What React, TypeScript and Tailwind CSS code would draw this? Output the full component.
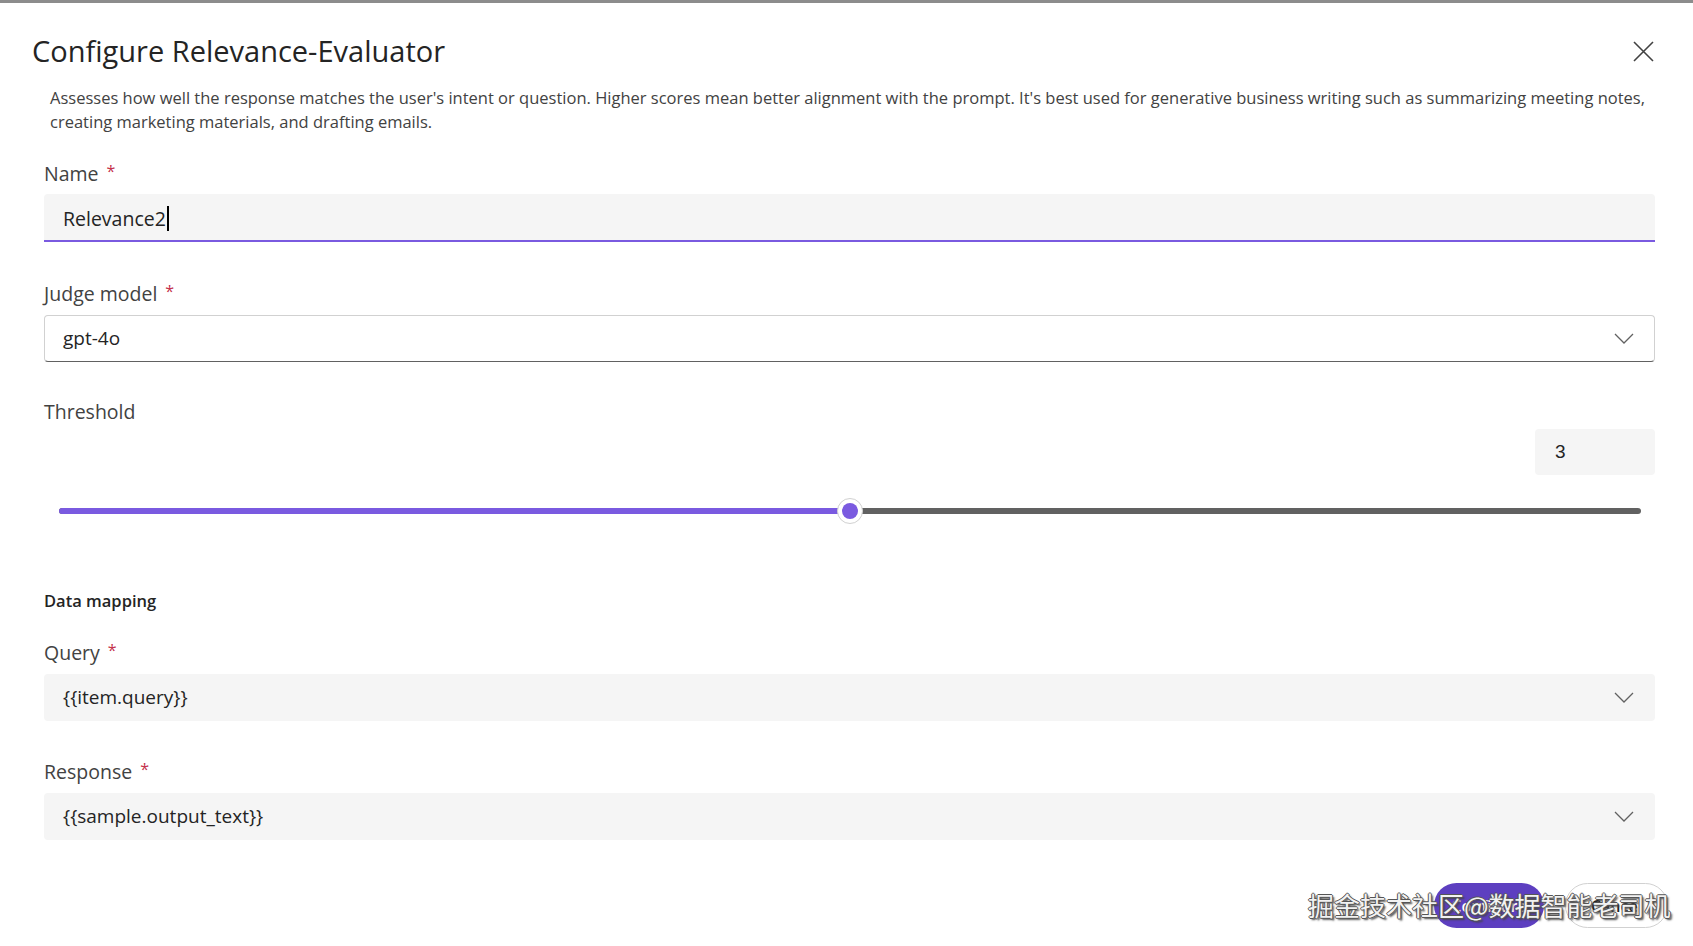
import { useState } from "react";

function Label({ text, required }: { text: string; required?: boolean }) {
  return (
    <div className="text-[19.5px] leading-[26px] text-[#424242]">
      {text}
      {required && <span className="ml-[8px] align-top text-[16px] leading-[20px] text-[#c4314b]">*</span>}
    </div>
  );
}

function Chevron() {
  return (
    <svg width="20" height="11" viewBox="0 0 20 11" fill="none">
      <path d="M1 1l9 9 9-9" stroke="#616161" strokeWidth="1.3" />
    </svg>
  );
}

function SelectField({ value, outlined }: { value: string; outlined?: boolean }) {
  return (
    <div
      className={
        outlined
          ? "flex h-[47px] items-center justify-between rounded-[4px] border border-[#d1d1d1] border-b-[#616161] bg-white pl-[18px] pr-[20px]"
          : "flex h-[47px] items-center justify-between rounded-[4px] bg-[#f5f5f5] pl-[19px] pr-[21px]"
      }
    >
      <span className="text-[19px] text-[#242424]">{value}</span>
      <Chevron />
    </div>
  );
}

export default function App() {
  const [threshold] = useState(3);
  const pct = ((threshold - 1) / 4) * 100;

  return (
    <div className="relative min-h-screen bg-white font-['Open_Sans',sans-serif]">
      <div className="h-[3px] bg-[#8c8c8c]" />

      <div className="pl-[44px] pr-[38px]">
        <div className="-ml-[12px] flex items-center justify-between pt-[30px]">
          <h1 className="text-[29px] font-medium leading-[36px] text-[#242424]">Configure Relevance-Evaluator</h1>
          <svg width="21" height="21" viewBox="0 0 21 21" fill="none" className="mr-[1px]">
            <path d="M1 1l19 19M20 1L1 20" stroke="#424242" strokeWidth="1.6" />
          </svg>
        </div>

        <p className="ml-[6px] mt-[17px] whitespace-nowrap text-[16.5px] leading-[24px] text-[#424242]">
          Assesses how well the response matches the user's intent or question. Higher scores mean better alignment with the prompt. It's best used for generative business writing such as summarizing meeting notes,
          <br />
          creating marketing materials, and drafting emails.
        </p>

        <div className="mt-[27px]">
          <Label text="Name" required />
          <div className="mt-[7px] flex h-[48px] items-center rounded-t-[4px] border-b-[2.5px] border-[#7a5ae0] bg-[#f5f5f5] pl-[19px] pt-[3px]">
            <span className="text-[19.5px] text-[#242424]">Relevance2</span>
            <span className="ml-[1px] h-[25px] w-[2px] bg-black" />
          </div>
        </div>

        <div className="mt-[39px]">
          <Label text="Judge model" required />
          <div className="mt-[8px]">
            <SelectField value="gpt-4o" outlined />
          </div>
        </div>

        <div className="mt-[37px]">
          <Label text="Threshold" />
          <div className="mt-[4px] flex justify-end">
            <div className="flex h-[46px] w-[120px] items-center rounded-[4px] bg-[#f5f5f5] pl-[20px] font-['Liberation_Sans',sans-serif] text-[19px] text-[#242424]">
              {threshold}
            </div>
          </div>
          <div className="mt-[23px] flex h-[26px] items-center pl-[15px] pr-[14px]">
            <div className="relative h-[6px] w-full rounded-full bg-[#616161]">
              <div className="absolute left-0 top-0 h-full rounded-full bg-[#7a5ae0]" style={{ width: `${pct}%` }} />
              <div
                className="absolute top-1/2 flex h-[26px] w-[26px] -translate-x-1/2 -translate-y-1/2 items-center justify-center rounded-full border border-[#d1d1d1] bg-white"
                style={{ left: `${pct}%` }}
              >
                <div className="h-[16px] w-[16px] rounded-full bg-[#7a5ae0]" />
              </div>
            </div>
          </div>
        </div>

        <div className="mt-[66px] text-[16.5px] font-semibold leading-[22px] text-[#242424]">Data mapping</div>

        <div className="mt-[28px]">
          <Label text="Query" required />
          <div className="mt-[8px]">
            <SelectField value="{{item.query}}" />
          </div>
        </div>

        <div className="mt-[38px]">
          <Label text="Response" required />
          <div className="mt-[8px]">
            <SelectField value="{{sample.output_text}}" />
          </div>
        </div>

        <div className="-mr-[13px] mt-[43px] flex justify-end gap-[21px]">
          <button className="h-[45px] w-[110px] rounded-full bg-[#5d3fc0] text-[16px] font-semibold text-white">Configure</button>
          <button className="h-[45px] w-[103px] rounded-full border border-[#d1d1d1] bg-white text-[16px] font-semibold text-[#242424]">Cancel</button>
        </div>
      </div>

      {/* site watermark stamped over the footer */}
      <div className="pointer-events-none absolute left-[1308px] top-[887px] font-['Noto_Sans_CJK_SC',sans-serif] text-[26px] leading-[36px] text-[#f2f2f2] [text-shadow:1px_0_0_#555,-1px_0_0_#555,0_1px_0_#555,0_-1px_0_#555,2px_2px_2px_#444]">
        掘金技术社区@数据智能老司机
      </div>
    </div>
  );
}
